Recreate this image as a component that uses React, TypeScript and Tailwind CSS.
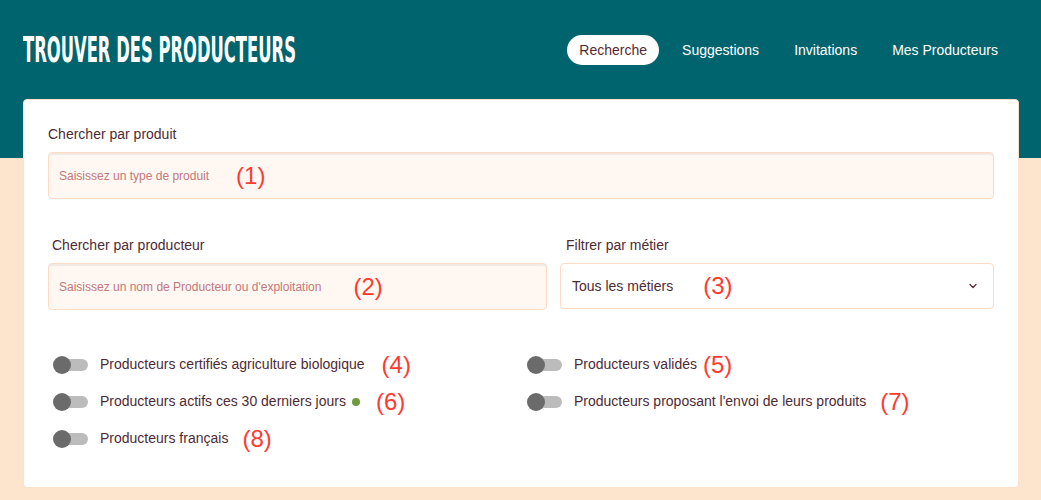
import { ChevronDown } from 'lucide-react';

const font = { fontFamily: '"Liberation Sans", Arial, sans-serif' };

function Toggle() {
    return (
        <span className="relative inline-flex items-center w-[35px] h-[18px] shrink-0">
            <span className="absolute left-[2px] right-0 h-[12px] rounded-full bg-[#bcbcbc]" />
            <span className="absolute left-0 w-[18px] h-[18px] rounded-full bg-[#6b6b6b]" />
        </span>
    );
}

function Mark({ n, className = '' }: { n: number; className?: string }) {
    return <span className={`text-[24px] leading-none text-[#ff3b30] ${className}`}>({n})</span>;
}

function Switch({ label, mark, gap, dot }: { label: string; mark: number; gap: string; dot?: boolean }) {
    return (
        <div className="flex items-center h-[37px]">
            <Toggle />
            <span className="ml-[12px] text-[14px] text-[#4f2a33]">{label}</span>
            {dot && <span className="ml-[6px] w-[8px] h-[8px] rounded-full bg-[#6c9b3e]" />}
            <Mark n={mark} className={gap} />
        </div>
    );
}

export default function App() {
    const tabs = ['Recherche', 'Suggestions', 'Invitations', 'Mes Producteurs'];

    return (
        <div className="min-h-[500px] bg-[#fde4cd]" style={font}>
            {/* Header */}
            <div className="h-[158px] bg-[#00646f] px-[23px] pt-[35px]">
                <div className="flex items-center justify-between h-[30px]">
                    <h1
                        className="text-white font-bold text-[35px] leading-none uppercase origin-left scale-x-[0.52] whitespace-nowrap"
                        style={{ fontFamily: '"Liberation Sans Narrow", "DejaVu Sans Condensed", "Liberation Sans", sans-serif' }}
                    >
                        Trouver des producteurs
                    </h1>
                    <nav className="flex items-center gap-[11px] mr-[8px]">
                        {tabs.map((t, i) => (
                            <span
                                key={t}
                                className={`h-[30px] px-[12px] flex items-center rounded-full text-[14px] ${i === 0 ? 'bg-white text-[#5a2832]' : 'text-white'}`}
                            >
                                {t}
                            </span>
                        ))}
                    </nav>
                </div>
            </div>

            {/* Card */}
            <div className="mx-[23px] -mt-[59px] w-[996px] h-[389px] bg-white border border-[#fde0c8] rounded-[4px] px-[24px] pt-[25px]">
                <label className="block text-[14px] text-[#4f2a33] leading-[18px]">Chercher par produit</label>
                <div className="mt-[9px] h-[47px] flex items-center bg-[#fff7f1] border border-[#fcdcc4] rounded-[4px] shadow-[inset_0_2px_1px_rgba(0,0,0,0.06)] px-[10px]">
                    <span className="text-[12px] text-[#c4787a]">Saisissez un type de produit</span>
                    <Mark n={1} className="ml-[27px]" />
                </div>

                <div className="grid grid-cols-[499px_1fr] gap-x-[13px] mt-[37px]">
                    <div>
                        <label className="block text-[14px] text-[#4f2a33] leading-[18px] pl-[4px]">Chercher par producteur</label>
                        <div className="mt-[9px] h-[47px] flex items-center bg-[#fff7f1] border border-[#fcdcc4] rounded-[4px] shadow-[inset_0_2px_1px_rgba(0,0,0,0.06)] px-[10px]">
                            <span className="text-[12px] text-[#c4787a]">Saisissez un nom de Producteur ou d'exploitation</span>
                            <Mark n={2} className="ml-[32px]" />
                        </div>
                    </div>
                    <div>
                        <label className="block text-[14px] text-[#4f2a33] leading-[18px] pl-[6px]">Filtrer par métier</label>
                        <div className="mt-[9px] h-[46px] flex items-center bg-white border border-[#fcdcc4] rounded-[4px] pl-[11px] pr-[14px]">
                            <span className="text-[14px] text-[#4f2a33]">Tous les métiers</span>
                            <Mark n={3} className="ml-[30px]" />
                            <ChevronDown className="ml-auto w-[12px] h-[12px] text-[#5a2832]" strokeWidth={2.5} />
                        </div>
                    </div>
                </div>

                <div className="grid grid-cols-[474px_1fr] mt-[36px] pl-[5px]">
                    <Switch label="Producteurs certifiés agriculture biologique" mark={4} gap="ml-[17px]" />
                    <Switch label="Producteurs validés" mark={5} gap="ml-[6px]" />
                    <Switch label="Producteurs actifs ces 30 derniers jours" mark={6} gap="ml-[16px]" dot />
                    <Switch label="Producteurs proposant l'envoi de leurs produits" mark={7} gap="ml-[14px]" />
                    <Switch label="Producteurs français" mark={8} gap="ml-[14px]" />
                </div>
            </div>
        </div>
    );
}
